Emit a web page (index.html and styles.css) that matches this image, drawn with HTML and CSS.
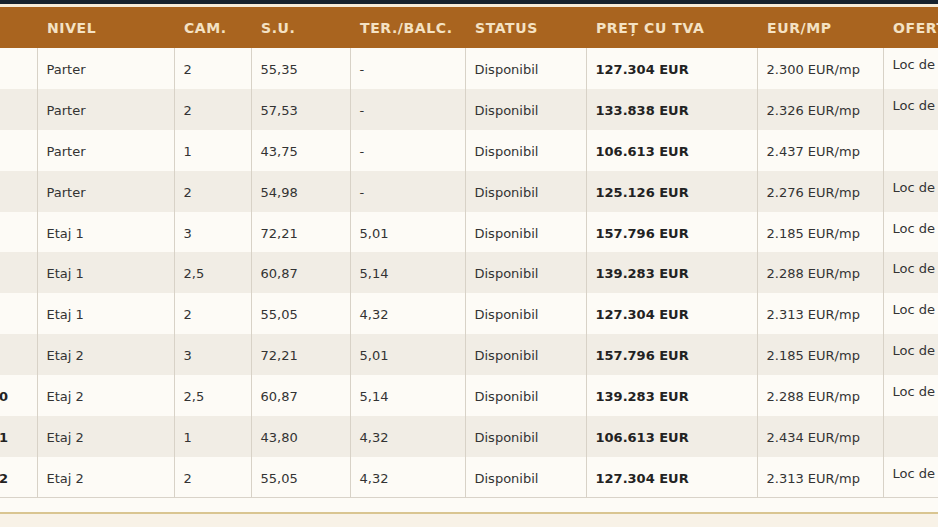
FILE: index.html
```html
<!DOCTYPE html>
<html lang="ro">
<head>
<meta charset="utf-8">
<title>Apartamente</title>
<link rel="stylesheet" href="styles.css">
</head>
<body>
<div class="topbar"></div>
<div class="topline"></div>
<div class="table-wrap">
<table class="units">
<colgroup>
<col class="c-nr"><col class="c-nivel"><col class="c-cam"><col class="c-su"><col class="c-ter"><col class="c-status"><col class="c-pret"><col class="c-eur"><col class="c-oferta">
</colgroup>
<thead>
<tr><th></th><th>NIVEL</th><th>CAM.</th><th>S.U.</th><th>TER./BALC.</th><th>STATUS</th><th>PREȚ CU TVA</th><th>EUR/MP</th><th>OFERTĂ</th></tr>
</thead>
<tbody>
<tr><td class="nr">1</td><td>Parter</td><td>2</td><td>55,35</td><td>-</td><td>Disponibil</td><td class="price">127.304 EUR</td><td>2.300 EUR/mp</td><td class="offer">Loc de parcare</td></tr>
<tr><td class="nr">2</td><td>Parter</td><td>2</td><td>57,53</td><td>-</td><td>Disponibil</td><td class="price">133.838 EUR</td><td>2.326 EUR/mp</td><td class="offer">Loc de parcare</td></tr>
<tr><td class="nr">3</td><td>Parter</td><td>1</td><td>43,75</td><td>-</td><td>Disponibil</td><td class="price">106.613 EUR</td><td>2.437 EUR/mp</td><td class="offer"></td></tr>
<tr><td class="nr">4</td><td>Parter</td><td>2</td><td>54,98</td><td>-</td><td>Disponibil</td><td class="price">125.126 EUR</td><td>2.276 EUR/mp</td><td class="offer">Loc de parcare</td></tr>
<tr><td class="nr">5</td><td>Etaj 1</td><td>3</td><td>72,21</td><td>5,01</td><td>Disponibil</td><td class="price">157.796 EUR</td><td>2.185 EUR/mp</td><td class="offer">Loc de parcare</td></tr>
<tr><td class="nr">6</td><td>Etaj 1</td><td>2,5</td><td>60,87</td><td>5,14</td><td>Disponibil</td><td class="price">139.283 EUR</td><td>2.288 EUR/mp</td><td class="offer">Loc de parcare</td></tr>
<tr><td class="nr">7</td><td>Etaj 1</td><td>2</td><td>55,05</td><td>4,32</td><td>Disponibil</td><td class="price">127.304 EUR</td><td>2.313 EUR/mp</td><td class="offer">Loc de parcare</td></tr>
<tr><td class="nr">8</td><td>Etaj 2</td><td>3</td><td>72,21</td><td>5,01</td><td>Disponibil</td><td class="price">157.796 EUR</td><td>2.185 EUR/mp</td><td class="offer">Loc de parcare</td></tr>
<tr><td class="nr">10</td><td>Etaj 2</td><td>2,5</td><td>60,87</td><td>5,14</td><td>Disponibil</td><td class="price">139.283 EUR</td><td>2.288 EUR/mp</td><td class="offer">Loc de parcare</td></tr>
<tr><td class="nr">11</td><td>Etaj 2</td><td>1</td><td>43,80</td><td>4,32</td><td>Disponibil</td><td class="price">106.613 EUR</td><td>2.434 EUR/mp</td><td class="offer"></td></tr>
<tr><td class="nr">12</td><td>Etaj 2</td><td>2</td><td>55,05</td><td>4,32</td><td>Disponibil</td><td class="price">127.304 EUR</td><td>2.313 EUR/mp</td><td class="offer">Loc de parcare</td></tr>
</tbody>
</table>
</div>
<div class="footer-gap"></div>
<div class="footer-band"></div>
</body>
</html>
```
FILE: styles.css
```css
html, body {
  margin: 0;
  padding: 0;
}
body {
  width: 938px;
  height: 527px;
  overflow: hidden;
  background: #fdfbf6;
  font-family: "DejaVu Sans", Verdana, sans-serif;
  color: #333;
}
.topbar {
  height: 4px;
  background: #17222d;
}
.topline {
  height: 3px;
  background: #f7ecd8;
}
.table-wrap {
  margin-left: -20px;
  width: 1120px;
}
.units {
  border-collapse: collapse;
  table-layout: fixed;
  width: 1103px;
  font-size: 13px;
  border-bottom: 1px solid #d9d3c9;
}
.c-nr { width: 57px; }
.c-nivel { width: 137px; }
.c-cam { width: 77px; }
.c-su { width: 99px; }
.c-ter { width: 115px; }
.c-status { width: 121px; }
.c-pret { width: 171px; }
.c-eur { width: 126px; }
.c-oferta { width: 200px; }
.units th {
  height: 41px;
  padding: 0 0 0 10px;
  background: #a9641f;
  color: #f4e2c4;
  font-weight: bold;
  font-size: 14px;
  letter-spacing: 0.6px;
  text-align: left;
  white-space: nowrap;
  overflow: hidden;
  box-sizing: border-box;
}
.units td {
  height: 40.9px;
  padding: 2px 0 0 9px;
  text-align: left;
  vertical-align: middle;
  white-space: nowrap;
  overflow: hidden;
  border-left: 1px solid #d8d2c7;
  box-sizing: border-box;
}
.units td:first-child {
  border-left: none;
}
.units tbody tr:nth-child(odd) td {
  background: #fdfbf6;
}
.units tbody tr:nth-child(even) td {
  background: #f1ede5;
}
.units td.nr {
  font-weight: bold;
  color: #222;
  padding-left: 10px;
}
.units td.price {
  font-weight: bold;
  color: #222;
}
.units td.offer {
  vertical-align: top;
  padding-top: 9px;
}
.footer-gap {
  height: 14px;
}
.footer-band {
  height: 20px;
  border-top: 2px solid #d9c591;
  background: #f8f2e7;
}
```
